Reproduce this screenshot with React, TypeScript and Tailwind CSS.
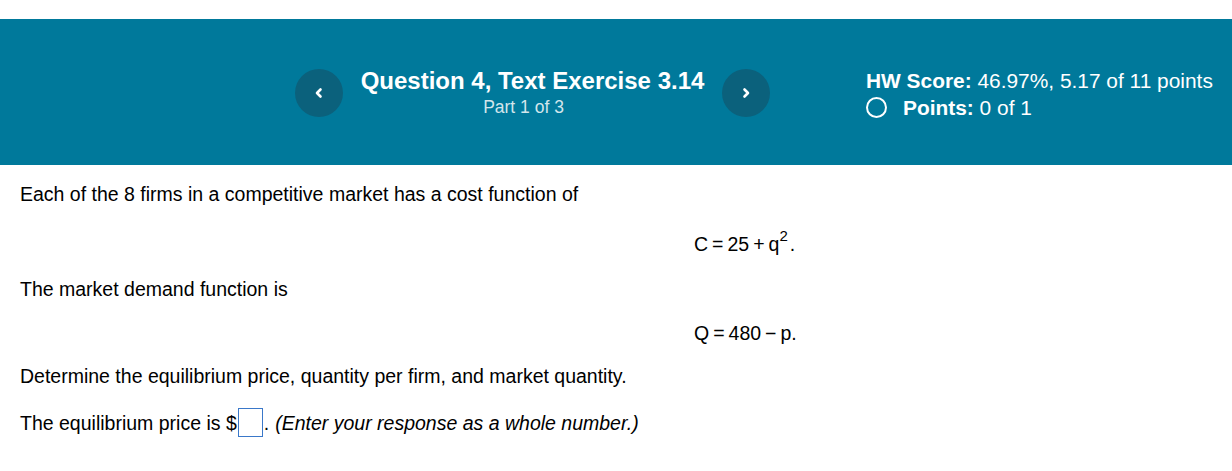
export default function App() {
  return (
    <div className="min-h-[471px] bg-white" style={{ fontFamily: '"Liberation Sans", Arial, sans-serif' }}>
      <div className="h-[19px]" />
      <header className="flex h-[146px] bg-[#00799b] text-white">
        <div className="flex w-[770px] items-center pl-[295px] pt-[1px]">
          <button className="flex h-[48px] w-[48px] items-center justify-center rounded-full bg-[#0b617c] text-white">
            <svg width="10" height="12" viewBox="0 0 10 12" fill="none" stroke="white" strokeWidth="2.6" strokeLinecap="round" strokeLinejoin="round">
              <path d="M6.5 2.5 3 6l3.5 3.5" />
            </svg>
          </button>
          <div className="flex w-[379px] flex-col items-center">
            <h1 className="text-[24px] font-bold leading-[25px]">Question 4, Text Exercise 3.14</h1>
            <p className="mt-[3px] mr-[18px] text-[17.5px] leading-[22px] text-[#d3e6ec]">Part 1 of 3</p>
          </div>
          <button className="flex h-[48px] w-[48px] items-center justify-center rounded-full bg-[#0b617c] text-white">
            <svg width="10" height="12" viewBox="0 0 10 12" fill="none" stroke="white" strokeWidth="2.6" strokeLinecap="round" strokeLinejoin="round">
              <path d="M3.5 2.5 7 6l-3.5 3.5" />
            </svg>
          </button>
        </div>
        <div className="ml-[96px] flex flex-col pt-[48px] text-[20.9px] leading-[27px]">
          <p>
            <span className="font-bold">HW Score:</span> 46.97%, 5.17 of 11 points
          </p>
          <p className="flex items-center">
            <span className="mr-[16px] h-[21px] w-[21px] rounded-full border-[2.5px] border-white" />
            <span className="font-bold">Points:</span>&nbsp;0 of 1
          </p>
        </div>
      </header>
      <main className="px-[20px] text-[19.5px] leading-[22px] text-black">
        <p className="pt-[18px]">Each of the 8 firms in a competitive market has a cost function of</p>
        <p className="mt-[28px] pl-[674px]">
          C<span className="mx-[4px]">=</span>25<span className="mx-[4px]">+</span>q
          <sup className="top-[-0.65em] text-[15px]">2</sup>
          <span className="ml-[2px]">.</span>
        </p>
        <p className="mt-[23px]">The market demand function is</p>
        <p className="mt-[22px] pl-[674px]">
          Q<span className="mx-[4px]">=</span>480<span className="mx-[4px]">−</span>p.
        </p>
        <p className="mt-[21px]">Determine the equilibrium price, quantity per firm, and market quantity.</p>
        <p className="mt-[21px] flex items-center">
          The equilibrium price is $
          <span className="mx-[1px] inline-block h-[29px] w-[25px] border border-[#3a78c9] bg-white" />
          . <i className="ml-[6px]">(Enter your response as a whole number.)</i>
        </p>
      </main>
    </div>
  );
}
